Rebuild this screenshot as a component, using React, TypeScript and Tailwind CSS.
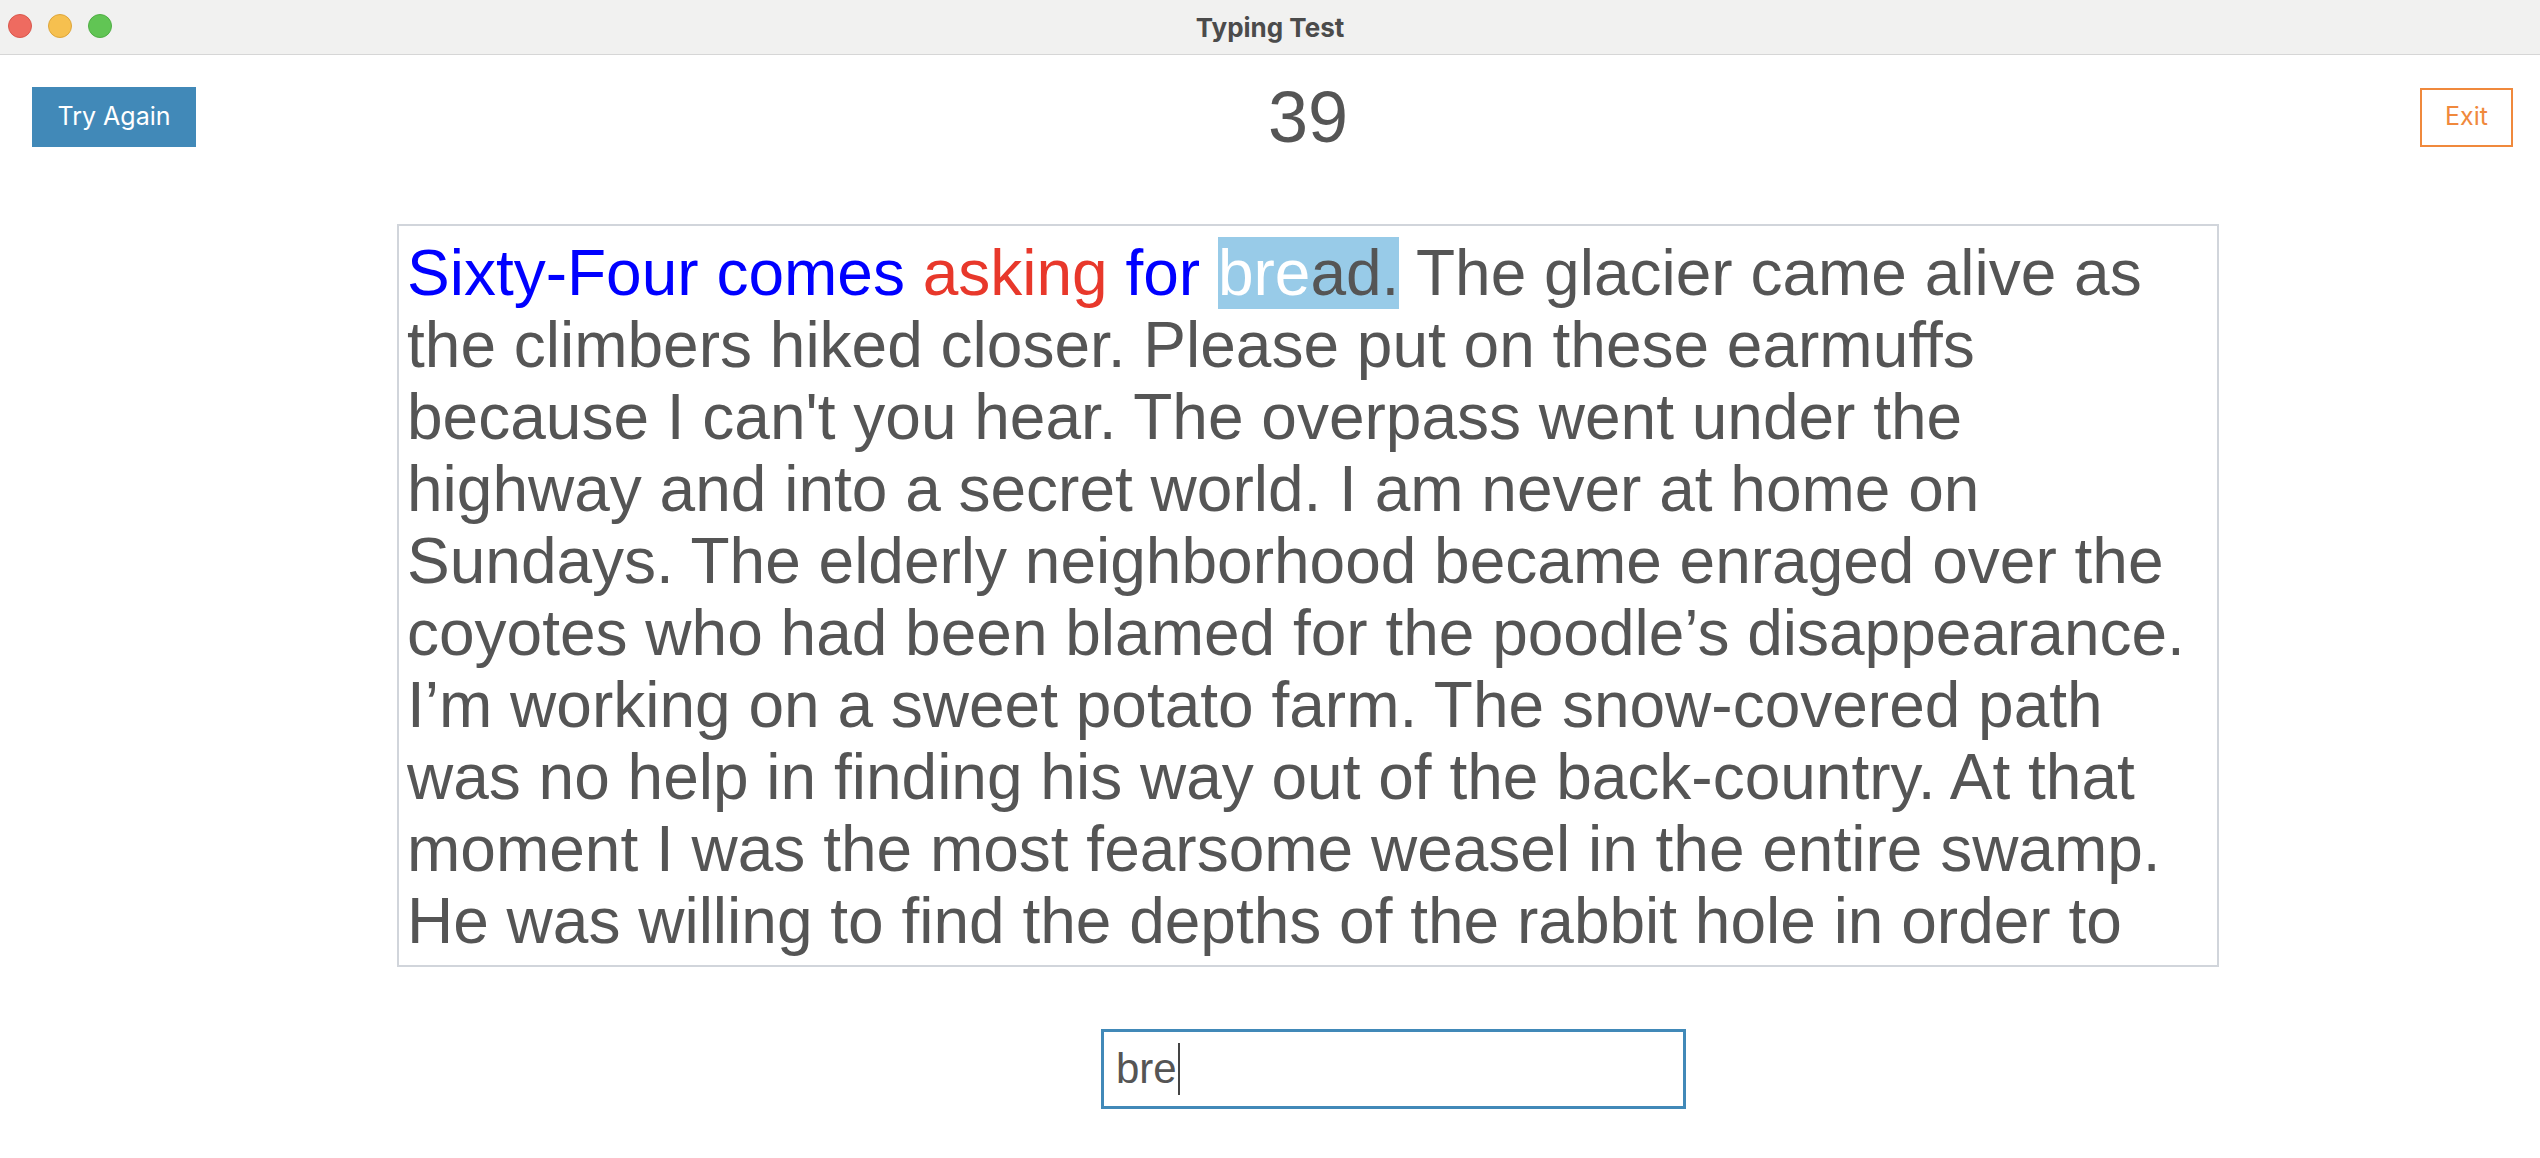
import React from "react";

const sans = { fontFamily: '"Liberation Sans", Arial, sans-serif' };

const restText =
  " The glacier came alive as the climbers hiked closer. Please put on these earmuffs because I can't you hear. The overpass went under the highway and into a secret world. I am never at home on Sundays. The elderly neighborhood became enraged over the coyotes who had been blamed for the poodle\u2019s disappearance. I\u2019m working on a sweet potato farm. The snow-covered path was no help in finding his way out of the back-country. At that moment I was the most fearsome weasel in the entire swamp. He was willing to find the depths of the rabbit hole in order to find out what was hidden at the bottom of it all.";

function TitleBar() {
  return (
    <div className="relative h-[55px] bg-[#f1f1f0] border-b border-[#d6d6d6] flex items-center justify-center">
      <div className="absolute left-[8px] top-[14px] flex gap-[16px]">
        <span className="w-[24px] h-[24px] rounded-full bg-[#ee6b60] border border-[#d9574c]" />
        <span className="w-[24px] h-[24px] rounded-full bg-[#f6c04f] border border-[#dea63a]" />
        <span className="w-[24px] h-[24px] rounded-full bg-[#61c554] border border-[#4fae44]" />
      </div>
      <span className="text-[26px] font-bold text-[#4b4b4b]" style={{ fontFamily: "Inter, sans-serif" }}>
        Typing Test
      </span>
    </div>
  );
}

export default function App() {
  return (
    <div className="w-[2540px] h-[1158px] bg-white overflow-hidden">
      <TitleBar />

      <div className="h-[60px] mt-[32px] flex items-center justify-between pl-[32px] pr-[27px]">
        <button
          className="w-[164px] h-[60px] bg-[#4189b8] text-white text-[25px]"
          style={{ fontFamily: "Inter, sans-serif" }}
        >
          Try Again
        </button>
        <div className="h-[60px] text-[72px] leading-[60px] text-[#555555]" style={sans}>
          39
        </div>
        <button
          className="w-[93px] h-[59px] border-2 border-[#f0893c] text-[#f0893c] text-[25px]"
          style={{ fontFamily: "Inter, sans-serif" }}
        >
          Exit
        </button>
      </div>

      <div className="ml-[397px] mt-[77px] w-[1822px] h-[743px] border-2 border-[#d1d5db] pt-[11px] pl-[8px] pr-[8px]">
        <div className="h-[720px] overflow-hidden text-[64px] leading-[72px] text-[#555555]" style={sans}>
          <span className="text-[#0000ff]">Sixty-Four comes </span>
          <span className="text-[#e8382b]">asking</span>
          <span className="text-[#0000ff]"> for </span>
          <span className="bg-[#98cbe8]">
            <span className="text-white">bre</span>ad.
          </span>
          {restText}
        </div>
      </div>

      <div className="ml-[1101px] mt-[62px] w-[585px] h-[80px] border-[3px] border-[#4189b8] flex items-center pl-[12px]">
        <span className="text-[42px] text-[#555555] leading-none" style={sans}>
          bre
        </span>
        <span className="w-[2px] h-[52px] bg-[#444444] ml-[1px]" />
      </div>
    </div>
  );
}
